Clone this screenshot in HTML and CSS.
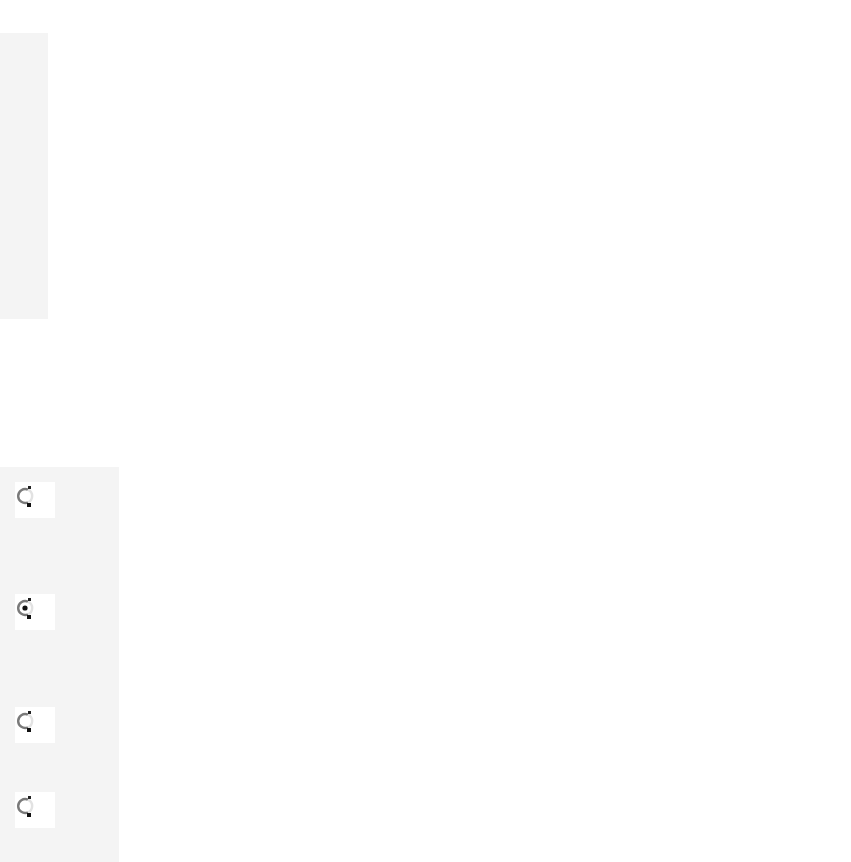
FILE: index.html
```html
<!doctype html>
<html lang="en">
  <head>
    <meta charset="UTF-8" />
    <meta name="viewport" content="width=device-width, initial-scale=1.0" />
    <title>Options</title>
    <link rel="stylesheet" href="styles.css">
  </head>
  <body>
    <div class="side-strip"></div>

    <div class="choice-panel">
      <div class="choice choice-1">
        <svg class="radio" width="18" height="24" viewBox="0 0 18 24">
          <path d="M12 4.6 A7 7 0 1 0 12 17.4" fill="none" stroke="#7a7a7a" stroke-width="2.4" />
          <path d="M12 4.6 A7 7 0 0 1 12 17.4" fill="none" stroke="#e2e2e2" stroke-width="2.4" />
          <rect x="12" y="1" width="3" height="3" fill="#222" />
          <rect x="11" y="18" width="4" height="4" fill="#111" />
        </svg>
      </div>
      <div class="choice choice-2">
        <svg class="radio" width="18" height="24" viewBox="0 0 18 24">
          <path d="M12 4.6 A7 7 0 1 0 12 17.4" fill="none" stroke="#7a7a7a" stroke-width="2.4" />
          <path d="M12 4.6 A7 7 0 0 1 12 17.4" fill="none" stroke="#e2e2e2" stroke-width="2.4" />
          <circle cx="9" cy="11" r="2.6" fill="#111" />
          <rect x="12" y="1" width="3" height="3" fill="#222" />
          <rect x="11" y="18" width="4" height="4" fill="#111" />
        </svg>
      </div>
      <div class="choice choice-3">
        <svg class="radio" width="18" height="24" viewBox="0 0 18 24">
          <path d="M12 4.6 A7 7 0 1 0 12 17.4" fill="none" stroke="#7a7a7a" stroke-width="2.4" />
          <path d="M12 4.6 A7 7 0 0 1 12 17.4" fill="none" stroke="#e2e2e2" stroke-width="2.4" />
          <rect x="12" y="1" width="3" height="3" fill="#222" />
          <rect x="11" y="18" width="4" height="4" fill="#111" />
        </svg>
      </div>
      <div class="choice choice-4">
        <svg class="radio" width="18" height="24" viewBox="0 0 18 24">
          <path d="M12 4.6 A7 7 0 1 0 12 17.4" fill="none" stroke="#7a7a7a" stroke-width="2.4" />
          <path d="M12 4.6 A7 7 0 0 1 12 17.4" fill="none" stroke="#e2e2e2" stroke-width="2.4" />
          <rect x="12" y="1" width="3" height="3" fill="#222" />
          <rect x="11" y="18" width="4" height="4" fill="#111" />
        </svg>
      </div>
    </div>
  </body>
</html>
```

FILE: styles.css
```css
:root {
  --panel-color: #f4f4f4;
  --box-color: #ffffff;
}

html,
body {
  height: 100%;
}

body {
  margin: 0;
  padding: 0;
  background-color: #ffffff;
  font-family: "Liberation Sans", Arial, sans-serif;
  display: flex;
  flex-direction: column;
}

.side-strip {
  margin-top: 33px;
  width: 48px;
  height: 286px;
  background-color: var(--panel-color);
}

.choice-panel {
  margin-top: 148px;
  width: 119px;
  flex: 1;
  background-color: var(--panel-color);
  padding: 15px 0 0 15px;
  box-sizing: border-box;
  display: flex;
  flex-direction: column;
}

.choice {
  width: 40px;
  height: 36px;
  background-color: var(--box-color);
  padding: 3px 0 0 1px;
  box-sizing: border-box;
}

.choice-2 {
  margin-top: 76px;
}

.choice-3 {
  margin-top: 77px;
}

.choice-4 {
  margin-top: 49px;
}

.radio {
  display: block;
}
```
